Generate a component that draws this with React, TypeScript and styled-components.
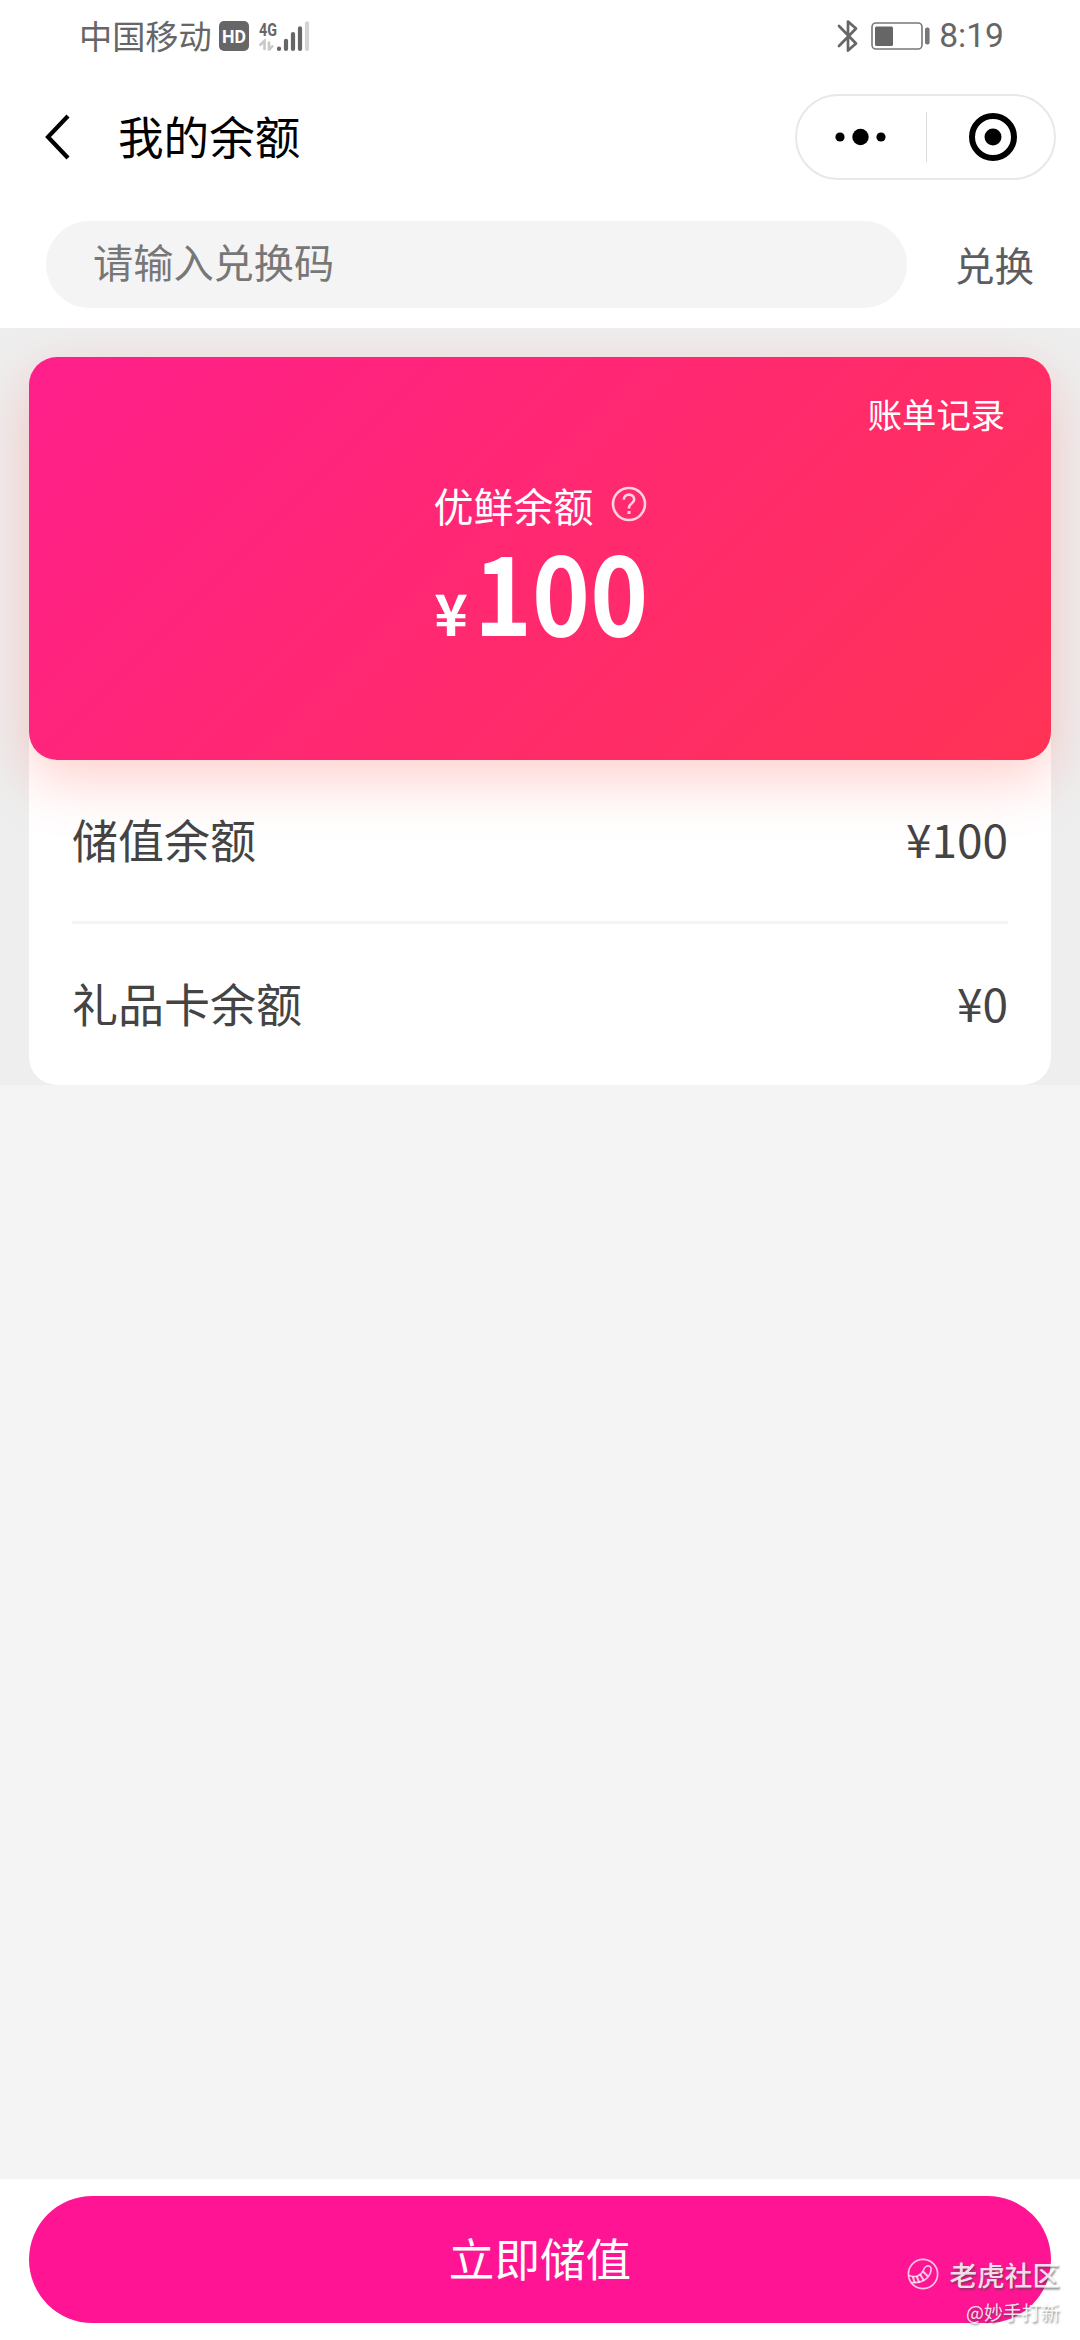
import React from "react";
import styled, { createGlobalStyle } from "styled-components";

const GlobalStyle = createGlobalStyle`
  * { box-sizing: border-box; }
  body {
    margin: 0;
    background: #f4f4f4;
    font-family: "Noto Sans CJK SC", "Noto Sans", sans-serif;
  }
  svg { display: block; flex: none; }
`;

const Page = styled.div`
  width: 1080px;
  height: 2340px;
  display: flex;
  flex-direction: column;
  overflow: hidden;
  background: #f4f4f4;
`;

const StatusBar = styled.header`
  height: 72px;
  padding: 0 76px 0 79px;
  display: flex;
  align-items: center;
  justify-content: space-between;
  background: #fff;
  color: #666;
`;

const StatusGroup = styled.div`
  display: flex;
  align-items: center;
`;

const Carrier = styled.span`
  font-size: 33.2px;
  line-height: 48px;
  margin-right: 7px;
  padding-bottom: 2px;
`;

const Clock = styled.span`
  font-family: Roboto, sans-serif;
  font-size: 33.6px;
  line-height: 40px;
  margin-left: 8px;
`;

const NavBar = styled.nav`
  height: 130px;
  padding: 0 24px 0 44px;
  display: flex;
  align-items: center;
  background: #fff;
`;

const Title = styled.h1`
  margin: 0 auto 0 47px;
  padding-bottom: 4px;
  font-size: 45.6px;
  font-weight: 400;
  line-height: 66px;
  color: #000;
`;

const Capsule = styled.div`
  width: 261px;
  height: 86px;
  border: 2px solid #e8e8e8;
  border-radius: 43px;
  display: flex;
  align-items: center;
  padding: 0 37px 0 38px;
  justify-content: space-between;
`;

const CapsuleDivider = styled.span`
  width: 1px;
  height: 50px;
  margin-left: -3px;
  background: #dcdcdc;
`;

const RedeemBar = styled.section`
  height: 126px;
  padding: 19px 46px 20px;
  display: flex;
  align-items: center;
  justify-content: space-between;
  background: #fff;
`;

const CodeField = styled.div`
  width: 861px;
  height: 87px;
  padding: 0 47px;
  border-radius: 44px;
  background: #f4f4f4;
  color: #777;
  font-size: 40.2px;
  line-height: 80px;
`;

const RedeemButton = styled.span`
  padding-bottom: 2px;
  font-size: 39.5px;
  line-height: 58px;
  color: #5c5d61;
`;

const BalanceSection = styled.section`
  height: 757px;
  padding: 29px 29px 0;
  background: #eee;
  overflow: hidden;
`;

const BalanceCard = styled.div`
  position: relative;
  z-index: 1;
  height: 403px;
  padding: 32px 46px 0;
  border-radius: 28px;
  background: linear-gradient(135deg, #ff1f8b 0%, #ff3355 100%);
  box-shadow: 0 20px 56px rgba(255, 75, 60, 0.26);
  display: flex;
  flex-direction: column;
  align-items: center;
  color: #fff;
`;

const BillLink = styled.span`
  align-self: flex-end;
  font-size: 34.3px;
  line-height: 48px;
`;

const BalanceLabel = styled.div`
  display: flex;
  align-items: center;
  gap: 17px;
  margin-top: 39px;
  font-size: 40px;
  line-height: 58px;
`;

const Amount = styled.div`
  display: flex;
  align-items: baseline;
  gap: 6px;
  margin-top: -1px;
  padding-left: 3px;
  font-weight: 700;
  line-height: 110px;
`;

const Currency = styled.span`
  font-size: 57px;
`;

/* Condensed figures; the negative margin gives back the width the scale removes. */
const Figure = styled.span`
  font-size: 110px;
  transform: scaleX(0.895);
  transform-origin: left;
  margin-right: -20px;
`;

const Breakdown = styled.div`
  height: 365px;
  margin-top: -40px;
  padding: 40px 43px 0;
  border-radius: 0 0 28px 28px;
  background: #fff;
`;

const BreakdownRow = styled.div<{ $divided?: boolean }>`
  height: ${(p) => (p.$divided ? 164 : 161)}px;
  padding-bottom: 5px;
  border-bottom: ${(p) => (p.$divided ? "3px solid #f4f4f4" : "none")};
  display: flex;
  align-items: center;
  justify-content: space-between;
  font-size: 46px;
  line-height: 66px;
  color: #444;
`;

const Footer = styled.footer`
  position: relative;
  height: 161px;
  margin-top: auto;
  padding: 17px 29px;
  background: #fff;
`;

const TopUpButton = styled.div`
  height: 127px;
  border-radius: 64px;
  background: #ff1493;
  color: #fff;
  font-size: 45.6px;
  line-height: 122px;
  text-align: center;
`;

const Watermark = styled.div`
  position: absolute;
  right: 20px;
  bottom: 14px;
  display: flex;
  flex-direction: column;
  align-items: flex-end;
  color: rgba(255, 255, 255, 0.86);
  text-shadow: 1px 2px 2px rgba(70, 70, 70, 0.6);
`;

const WatermarkBrand = styled.div`
  display: flex;
  align-items: center;
  gap: 11px;
  font-size: 27.6px;
  font-weight: 500;
  line-height: 40px;
`;

const WatermarkAuthor = styled.div`
  font-size: 19px;
  line-height: 28px;
  margin-top: 4px;
`;

const NetworkIcon = () => (
  <svg width="60" height="36" viewBox="0 0 60 36" style={{ marginRight: -3 }}>
    <rect x="0" y="3" width="30" height="30" rx="5" fill="#666" />
    <text x="3" y="24.5" textLength="24" lengthAdjust="spacingAndGlyphs" fontFamily="Roboto, sans-serif" fontWeight="700" fontSize="18.5" fill="#fff">HD</text>
    <text x="40" y="17.5" textLength="18" lengthAdjust="spacingAndGlyphs" fontFamily="Roboto, sans-serif" fontWeight="700" fontSize="18.5" fill="#666">4G</text>
    <path d="M40.500 27.500l5-4.500v9M50 32.500v-9M50 32l4-4.500" fill="none" stroke="#c8c8c8" strokeWidth="2.600" />
  </svg>
);

const SignalIcon = () => (
  <svg width="34" height="36" viewBox="0 0 34 36">
    <g strokeWidth="4.200" strokeLinecap="round" stroke="#666">
      <path d="M3 30.500v.5M10 22.800v8.200M17 16v15M24 10.300v20.700" />
      <path d="M31 5.300v25.700" stroke="#d4d4d4" />
    </g>
  </svg>
);

const BluetoothIcon = () => (
  <svg width="22" height="36" viewBox="0 0 22 36">
    <path d="M2 8l17 17.500-8 7V3.500l8 7L2 28" fill="none" stroke="#666" strokeWidth="2.700" strokeLinejoin="round" strokeLinecap="round" />
  </svg>
);

const BatteryIcon = () => (
  <svg width="60" height="30" viewBox="0 0 60 30" style={{ marginLeft: 12 }}>
    <rect x="1" y="2" width="50" height="26" rx="4" fill="none" stroke="#777" strokeWidth="1.600" />
    <rect x="4" y="5.500" width="18" height="19.500" rx="1.500" fill="#666" />
    <rect x="54" y="6.500" width="4.600" height="17" rx="2" fill="#777" />
  </svg>
);

const BackIcon = () => (
  <svg width="27" height="46" viewBox="0 0 27 46">
    <path d="M24 2L4 23l20 21" fill="none" stroke="#000" strokeWidth="4.200" />
  </svg>
);

const MoreIcon = () => (
  <svg width="52" height="18" viewBox="0 0 52 18">
    <circle cx="5" cy="9" r="4.600" />
    <circle cx="25.500" cy="9" r="8.200" />
    <circle cx="46" cy="9" r="4.600" />
  </svg>
);

const TargetIcon = () => (
  <svg width="48" height="48" viewBox="0 0 48 48">
    <circle cx="24" cy="24" r="21" fill="none" stroke="#000" strokeWidth="6" />
    <circle cx="24" cy="24" r="8.500" />
  </svg>
);

const HelpIcon = () => (
  <svg width="36" height="36" viewBox="0 0 36 36" style={{ marginTop: -2 }}>
    <g fill="none" stroke="#fff" strokeOpacity="0.8" strokeWidth="2.600">
      <circle cx="18" cy="18" r="16" />
      <path d="M12.800 13.800c0-3.200 2.200-5.200 5.200-5.200s5.200 2 5.200 4.900c0 3.600-5.200 4.300-5.200 7.900v1.200" />
      <path d="M18 25v3" strokeWidth="3" />
    </g>
  </svg>
);

const TigerIcon = () => (
  <svg width="32" height="32" viewBox="0 0 32 32">
    <g fill="none" stroke="#fff" strokeOpacity="0.75" strokeWidth="1.700" strokeLinecap="round">
      <circle cx="16" cy="16" r="14.600" />
      <path d="M2 17.500c6 2.500 12 .5 14.500-5.500 1-3 3.500-4.500 5.500-4 2.500.8 2.600 3.500 1.500 6.500-2.500 7-9.500 11-18.500 10" />
      <path d="M6 19.500l1.500 4.500M10 19l2 4.800M13.500 17l3 5M16.500 14l4 4" strokeWidth="2" />
    </g>
  </svg>
);

export default function App() {
  return (
    <Page>
      <GlobalStyle />
      <StatusBar>
        <StatusGroup>
          <Carrier>中国移动</Carrier>
          <NetworkIcon />
          <SignalIcon />
        </StatusGroup>
        <StatusGroup>
          <BluetoothIcon />
          <BatteryIcon />
          <Clock>8:19</Clock>
        </StatusGroup>
      </StatusBar>
      <NavBar>
        <BackIcon />
        <Title>我的余额</Title>
        <Capsule>
          <MoreIcon />
          <CapsuleDivider />
          <TargetIcon />
        </Capsule>
      </NavBar>
      <RedeemBar>
        <CodeField>请输入兑换码</CodeField>
        <RedeemButton>兑换</RedeemButton>
      </RedeemBar>
      <BalanceSection>
        <BalanceCard>
          <BillLink>账单记录</BillLink>
          <BalanceLabel>
            优鲜余额
            <HelpIcon />
          </BalanceLabel>
          <Amount>
            <Currency>¥</Currency>
            <Figure>100</Figure>
          </Amount>
        </BalanceCard>
        <Breakdown>
          <BreakdownRow $divided>
            <span>储值余额</span>
            <span>¥100</span>
          </BreakdownRow>
          <BreakdownRow>
            <span>礼品卡余额</span>
            <span>¥0</span>
          </BreakdownRow>
        </Breakdown>
      </BalanceSection>
      <Footer>
        <TopUpButton>立即储值</TopUpButton>
        <Watermark>
          <WatermarkBrand>
            <TigerIcon />
            老虎社区
          </WatermarkBrand>
          <WatermarkAuthor>@妙手打新</WatermarkAuthor>
        </Watermark>
      </Footer>
    </Page>
  );
}
